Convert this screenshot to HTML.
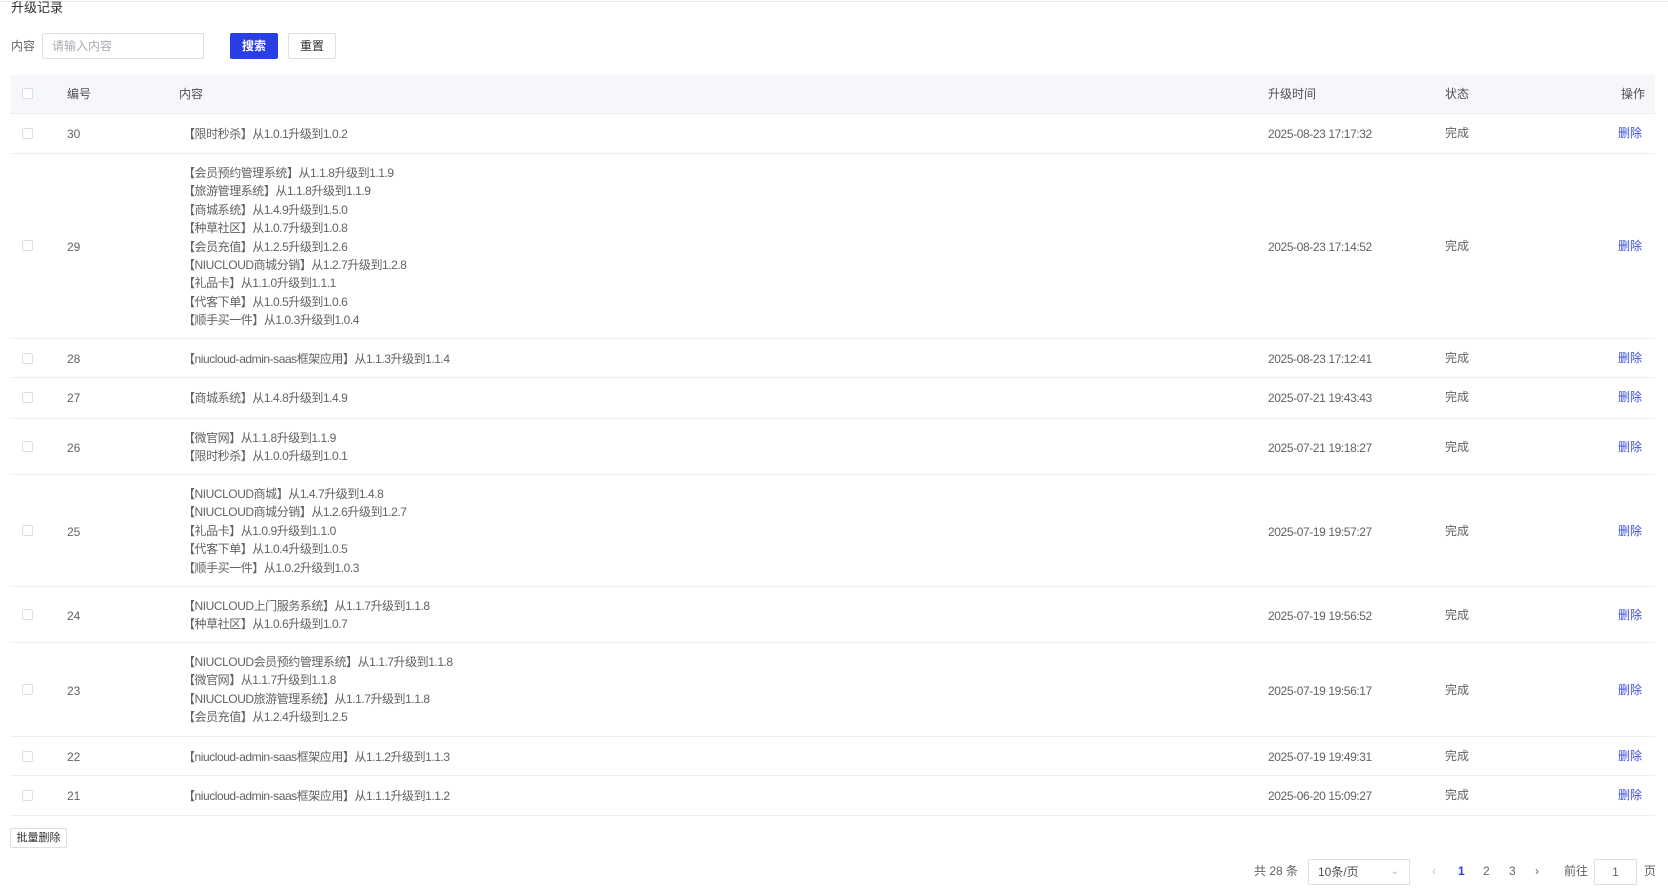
<!DOCTYPE html>
<html><head><meta charset="utf-8"><style>
*{box-sizing:border-box;margin:0;padding:0}
body{width:1668px;height:888px;background:#fff;font-family:"Liberation Sans","Noto Sans CJK SC",sans-serif;font-size:12px;color:#606266;position:relative;overflow:hidden}
.a{position:absolute}
.topline{left:0;top:1px;width:1668px;height:1px;background:#e8e8ec}
.title{left:11px;top:0;font-size:13px;color:#303133;line-height:16px}
.inp{left:42px;top:33px;width:162px;height:26px;border:1px solid #dcdfe6;border-radius:2px;color:#a8abb2;padding-left:9px;line-height:24px}
.btn{top:33px;height:26px;border-radius:2px;text-align:center;line-height:24px}
.tbl{left:10px;top:75px;width:1645px}
.row{position:relative;border-bottom:1px solid #ebeef5;}
.row>div{position:absolute;line-height:18px}
.hd{background:#f5f7fa;color:#505050}
.row>div.cb{left:12px;width:11px;height:11px;border:1px solid #dcdfe6;border-radius:2px;background:#fff}
.c{line-height:18.4px !important;letter-spacing:-0.45px}
.d{letter-spacing:-0.4px}
.del{color:#3d4fe0}
.pg{top:862px;line-height:18px}
</style></head><body>
<div class="a topline"></div>
<div class="a title">升级记录</div>
<div class="a" style="left:11px;top:38px;line-height:16px">内容</div>
<div class="a inp">请输入内容</div>
<div class="a btn" style="left:230px;width:48px;background:#2a3ee6;color:#fff;font-weight:bold;border:1px solid #2a3ee6">搜索</div>
<div class="a btn" style="left:288px;width:48px;border:1px solid #dcdfe6;color:#303133">重置</div>

<div class="a tbl">
<div class="row hd" style="height:39px">
<div class="cb" style="top:13px"></div><div style="left:57px;top:10px">编号</div><div style="left:169px;top:10px">内容</div><div style="left:1258px;top:10px">升级时间</div><div style="left:1435px;top:10px">状态</div><div style="left:1611px;top:10px">操作</div></div>
</div>
<div class="a" style="left:10px;top:114px;width:1645px" id="b">
<div class="row" style="height:40px"><div class="cb" style="top:14px"></div><div style="left:57px;top:11px">30</div><div class="c" style="left:173px;top:11px">【限时秒杀】从1.0.1升级到1.0.2</div><div class="d" style="left:1258px;top:11px">2025-08-23 17:17:32</div><div style="left:1435px;top:10px">完成</div><div class="del" style="left:1608px;top:10px">删除</div></div>
<div class="row" style="height:185px"><div class="cb" style="top:86px"></div><div style="left:57px;top:84px">29</div><div class="c" style="left:173px;top:10px">【会员预约管理系统】从1.1.8升级到1.1.9<br>【旅游管理系统】从1.1.8升级到1.1.9<br>【商城系统】从1.4.9升级到1.5.0<br>【种草社区】从1.0.7升级到1.0.8<br>【会员充值】从1.2.5升级到1.2.6<br>【NIUCLOUD商城分销】从1.2.7升级到1.2.8<br>【礼品卡】从1.1.0升级到1.1.1<br>【代客下单】从1.0.5升级到1.0.6<br>【顺手买一件】从1.0.3升级到1.0.4</div><div class="d" style="left:1258px;top:84px">2025-08-23 17:14:52</div><div style="left:1435px;top:83px">完成</div><div class="del" style="left:1608px;top:83px">删除</div></div>
<div class="row" style="height:39px"><div class="cb" style="top:14px"></div><div style="left:57px;top:11px">28</div><div class="c" style="left:173px;top:11px">【niucloud-admin-saas框架应用】从1.1.3升级到1.1.4</div><div class="d" style="left:1258px;top:11px">2025-08-23 17:12:41</div><div style="left:1435px;top:10px">完成</div><div class="del" style="left:1608px;top:10px">删除</div></div>
<div class="row" style="height:41px"><div class="cb" style="top:14px"></div><div style="left:57px;top:11px">27</div><div class="c" style="left:173px;top:11px">【商城系统】从1.4.8升级到1.4.9</div><div class="d" style="left:1258px;top:11px">2025-07-21 19:43:43</div><div style="left:1435px;top:10px">完成</div><div class="del" style="left:1608px;top:10px">删除</div></div>
<div class="row" style="height:56px"><div class="cb" style="top:22px"></div><div style="left:57px;top:20px">26</div><div class="c" style="left:173px;top:10px">【微官网】从1.1.8升级到1.1.9<br>【限时秒杀】从1.0.0升级到1.0.1</div><div class="d" style="left:1258px;top:20px">2025-07-21 19:18:27</div><div style="left:1435px;top:19px">完成</div><div class="del" style="left:1608px;top:19px">删除</div></div>
<div class="row" style="height:112px"><div class="cb" style="top:50px"></div><div style="left:57px;top:48px">25</div><div class="c" style="left:173px;top:10px">【NIUCLOUD商城】从1.4.7升级到1.4.8<br>【NIUCLOUD商城分销】从1.2.6升级到1.2.7<br>【礼品卡】从1.0.9升级到1.1.0<br>【代客下单】从1.0.4升级到1.0.5<br>【顺手买一件】从1.0.2升级到1.0.3</div><div class="d" style="left:1258px;top:48px">2025-07-19 19:57:27</div><div style="left:1435px;top:47px">完成</div><div class="del" style="left:1608px;top:47px">删除</div></div>
<div class="row" style="height:56px"><div class="cb" style="top:22px"></div><div style="left:57px;top:20px">24</div><div class="c" style="left:173px;top:10px">【NIUCLOUD上门服务系统】从1.1.7升级到1.1.8<br>【种草社区】从1.0.6升级到1.0.7</div><div class="d" style="left:1258px;top:20px">2025-07-19 19:56:52</div><div style="left:1435px;top:19px">完成</div><div class="del" style="left:1608px;top:19px">删除</div></div>
<div class="row" style="height:94px"><div class="cb" style="top:41px"></div><div style="left:57px;top:39px">23</div><div class="c" style="left:173px;top:10px">【NIUCLOUD会员预约管理系统】从1.1.7升级到1.1.8<br>【微官网】从1.1.7升级到1.1.8<br>【NIUCLOUD旅游管理系统】从1.1.7升级到1.1.8<br>【会员充值】从1.2.4升级到1.2.5</div><div class="d" style="left:1258px;top:39px">2025-07-19 19:56:17</div><div style="left:1435px;top:38px">完成</div><div class="del" style="left:1608px;top:38px">删除</div></div>
<div class="row" style="height:39px"><div class="cb" style="top:14px"></div><div style="left:57px;top:11px">22</div><div class="c" style="left:173px;top:11px">【niucloud-admin-saas框架应用】从1.1.2升级到1.1.3</div><div class="d" style="left:1258px;top:11px">2025-07-19 19:49:31</div><div style="left:1435px;top:10px">完成</div><div class="del" style="left:1608px;top:10px">删除</div></div>
<div class="row" style="height:40px"><div class="cb" style="top:14px"></div><div style="left:57px;top:11px">21</div><div class="c" style="left:173px;top:11px">【niucloud-admin-saas框架应用】从1.1.1升级到1.1.2</div><div class="d" style="left:1258px;top:11px">2025-06-20 15:09:27</div><div style="left:1435px;top:10px">完成</div><div class="del" style="left:1608px;top:10px">删除</div></div>
</div>

<div class="a" style="left:10px;top:828px;width:57px;height:20px;border:1px solid #dcdfe6;border-radius:2px;font-size:11px;text-align:center;line-height:18px;color:#303133">批量删除</div>
<div class="a pg" style="left:1254px">共 28 条</div>
<div class="a" style="left:1308px;top:859px;width:102px;height:26px;border:1px solid #dcdfe6;border-radius:2px;padding-left:9px;line-height:24px;color:#505050">10条/页<span style="position:absolute;right:10px;top:0;color:#b0b3b8;font-size:10px">&#8964;</span></div>
<div class="a pg" style="left:1432px;color:#c0c4cc">‹</div>
<div class="a pg" style="left:1458px;color:#2a3ee6;font-weight:bold">1</div>
<div class="a pg" style="left:1483px">2</div>
<div class="a pg" style="left:1509px">3</div>
<div class="a pg" style="left:1535px">›</div>
<div class="a pg" style="left:1564px">前往</div>
<div class="a" style="left:1594px;top:859px;width:43px;height:26px;border:1px solid #dcdfe6;border-radius:2px;text-align:center;line-height:24px">1</div>
<div class="a pg" style="left:1644px">页</div>
</body></html>
